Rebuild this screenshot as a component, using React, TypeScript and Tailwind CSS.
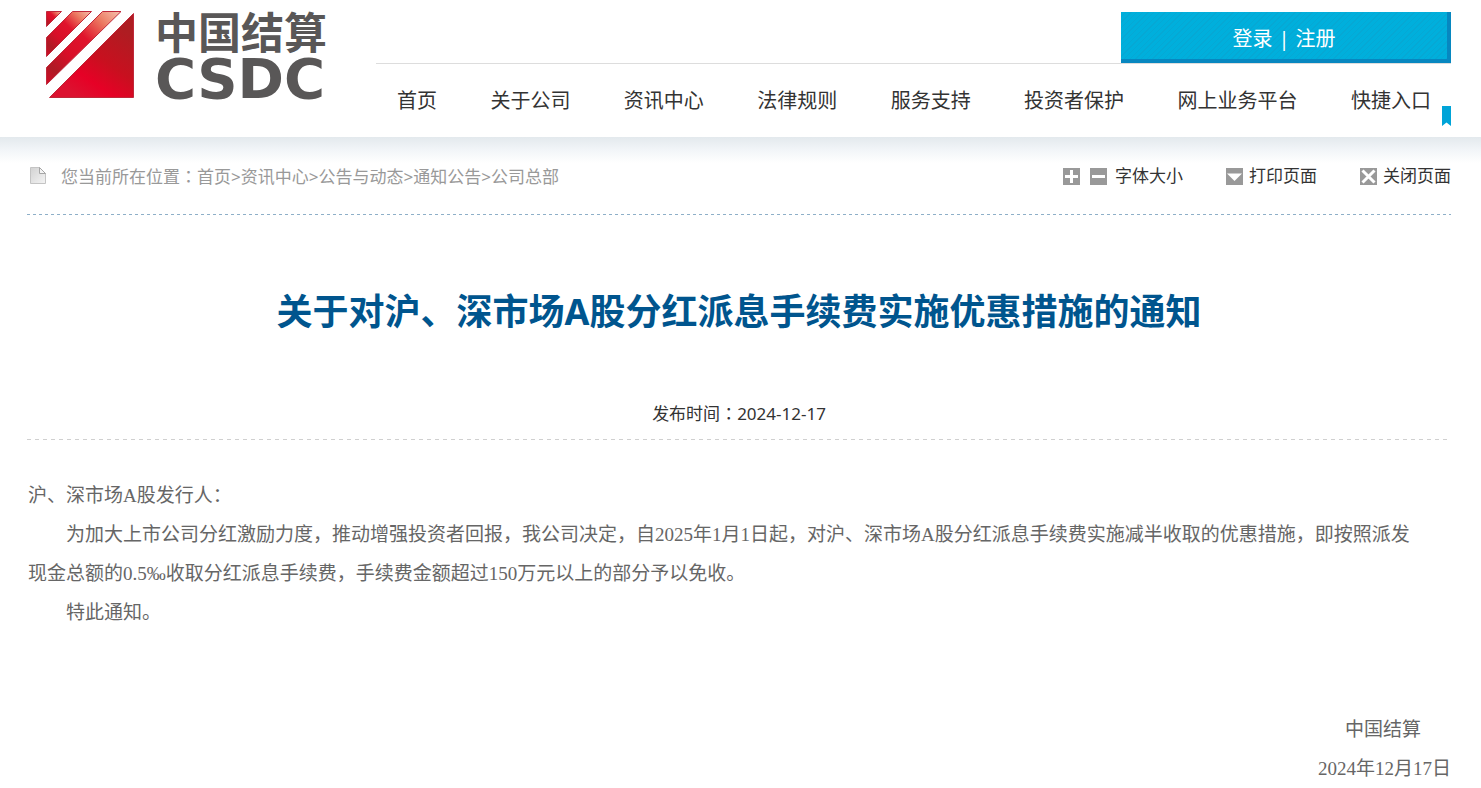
import React from 'react';

const navItems = ['首页', '关于公司', '资讯中心', '法律规则', '服务支持', '投资者保护', '网上业务平台', '快捷入口'];
const crumbs = ['首页', '资讯中心', '公告与动态', '通知公告', '公司总部'];

function Colon() {
  return <span className="font-['Noto_Sans_CJK_TC',sans-serif]">：</span>;
}

function LogoMark() {
  return (
    <svg width="90" height="90" viewBox="0 0 90 90" aria-hidden="true">
      <defs>
        <linearGradient id="band" x1="1" y1="0" x2="0" y2="1">
          <stop offset="0" stopColor="#f6c3b0" />
          <stop offset="0.2" stopColor="#ec7a62" />
          <stop offset="0.42" stopColor="#e0142c" />
          <stop offset="0.65" stopColor="#d80f28" />
          <stop offset="0.85" stopColor="#ae1a24" />
          <stop offset="1" stopColor="#d40a26" />
        </linearGradient>
        <linearGradient id="corner" x1="0.9" y1="0.2" x2="0.35" y2="1">
          <stop offset="0" stopColor="#ae1d22" />
          <stop offset="0.45" stopColor="#c8101f" />
          <stop offset="0.75" stopColor="#e60126" />
          <stop offset="1" stopColor="#dc1230" />
        </linearGradient>
      </defs>
      <g stroke="#c0283a" strokeWidth="1">
        <path d="M1.500 2.500H16.500L1.500 17.500Z" fill="url(#band)" />
        <path d="M27.500 2.500H46.500L1.500 47.500V28.500Z" fill="url(#band)" />
        <path d="M57.500 2.500H76L1.500 75.500V58.500Z" fill="url(#band)" />
        <path d="M88.500 4.500V88.500H4.500Z" fill="url(#corner)" />
      </g>
    </svg>
  );
}

function ToolIcon({ children }: { children: React.ReactNode }) {
  return (
    <svg width="17" height="17" viewBox="0 0 17 17" aria-hidden="true" className="block">
      <rect width="17" height="17" fill="#999" />
      {children}
    </svg>
  );
}

export default function App() {
  return (
    <div className="bg-white font-['Noto_Sans','Noto_Sans_CJK_SC',sans-serif] text-[#333]">
      <header className="flex h-[137px] pr-[30px]">
        <a href="#home" className="flex w-[376px] shrink-0 pt-[9px] pl-[45px] text-[#595757]">
          <LogoMark />
          <span className="flex flex-col pl-5 font-bold">
            <span className="font-['Noto_Sans_CJK_SC',sans-serif] text-[43px] leading-[42px]">中国结算</span>
            <span className="font-['DejaVu_Sans',sans-serif] text-[56px] leading-[56px]">CSDC</span>
          </span>
        </a>
        <div className="relative min-w-0 flex-1">
          <div className="flex h-16 items-end justify-end border-b border-[#ddd]">
            <div className="flex h-[51px] w-[330px] items-center justify-center gap-1.5 border-r-4 border-b-4 border-[#0787c0] bg-[repeating-linear-gradient(135deg,#00afdc_0px,#00afdc_3px,#06a8d4_3px,#06a8d4_4px)] pt-1.5 text-xl text-white">
              <a href="#login">登录</a>
              <span>|</span>
              <a href="#register">注册</a>
            </div>
          </div>
          <nav className="flex h-[74px] items-center justify-between pr-5 pl-[21px] text-xl">
            {navItems.map((item) => (
              <a key={item} href="#nav" className="whitespace-nowrap">{item}</a>
            ))}
          </nav>
          <svg className="absolute top-[106px] right-0" width="9" height="20" viewBox="0 0 9 20" aria-hidden="true">
            <path d="M0 0H9V20L4.500 16.500L0 20Z" fill="#00a4d8" />
          </svg>
        </div>
      </header>

      <main className="bg-[linear-gradient(#e3e9ed,#f3f6f9_14px,#fff_26px)] pr-[30px] pl-[27px]">
        <div className="flex h-[78px] items-center justify-between bg-[repeating-linear-gradient(90deg,#8eafc8_0px,#8eafc8_3px,transparent_3px,transparent_6px)] bg-[length:100%_1px] bg-bottom bg-no-repeat text-[17px] leading-6">
          <div className="flex items-center gap-3.5 text-[#999]">
            <svg width="20" height="18" viewBox="0 0 20 18" aria-hidden="true">
              <defs>
                <linearGradient id="sheet" x1="0" y1="0" x2="1" y2="1">
                  <stop offset="0" stopColor="#d2d2d2" />
                  <stop offset="1" stopColor="#f4f4f4" />
                </linearGradient>
              </defs>
              <path d="M3.500 .5H12.500L18.500 6.500V16.500H3.500Z" fill="url(#sheet)" stroke="#c4c4c4" />
              <path d="M12.500 .5V6.500H18.500Z" fill="#f4f4f4" stroke="#a6a6a6" />
            </svg>
            <div>
              您当前所在位置<Colon />
              {crumbs.map((crumb, i) => (
                <React.Fragment key={crumb}>
                  {i > 0 && '>'}
                  <a href="#crumb">{crumb}</a>
                </React.Fragment>
              ))}
            </div>
          </div>
          <div className="flex items-center gap-[43px]">
            <div className="flex items-center gap-2">
              <div className="flex gap-2.5">
                <button type="button" aria-label="放大字体">
                  <ToolIcon><path d="M8.500 2V15M2 8.500H15" stroke="#fff" strokeWidth="3" /></ToolIcon>
                </button>
                <button type="button" aria-label="缩小字体">
                  <ToolIcon><path d="M2 8.500H15" stroke="#fff" strokeWidth="3" /></ToolIcon>
                </button>
              </div>
              <span>字体大小</span>
            </div>
            <button type="button" className="flex items-center gap-1.5">
              <ToolIcon><path d="M1 5.500H16L8.500 13Z" fill="#fff" /></ToolIcon>
              打印页面
            </button>
            <button type="button" className="flex items-center gap-1.5">
              <ToolIcon><path d="M2.500 2.500L14.500 14.500M14.500 2.500L2.500 14.500" stroke="#fff" strokeWidth="3" /></ToolIcon>
              关闭页面
            </button>
          </div>
        </div>

        <h1 className="pt-[71px] text-center text-4xl leading-[52px] font-bold text-[#00558e]">
          关于对沪、深市场A股分红派息手续费实施优惠措施的通知
        </h1>
        <p className="mt-[63px] bg-[repeating-linear-gradient(90deg,#d0d0d0_0px,#d0d0d0_4px,transparent_4px,transparent_8px)] bg-[length:100%_1px] bg-bottom bg-no-repeat pb-3.5 text-center text-[17px] leading-6">
          发布时间<Colon />2024-12-17
        </p>

        <article className="pt-9 pl-px font-['Liberation_Serif','Noto_Sans_CJK_SC',serif] text-[19px] leading-[39px] text-[#666]">
          <p>沪、深市场A股发行人：</p>
          <p className="indent-[2em] pr-9">
            为加大上市公司分红激励力度，推动增强投资者回报，我公司决定，自2025年1月1日起，对沪、深市场A股分红派息手续费实施减半收取的优惠措施，即按照派发现金总额的0.5‰收取分红派息手续费，手续费金额超过150万元以上的部分予以免收。
          </p>
          <p className="indent-[2em]">特此通知。</p>
          <p className="pt-[78px] pr-[30px] text-right">中国结算</p>
          <p className="text-right">2024年12月17日</p>
        </article>
      </main>
    </div>
  );
}
